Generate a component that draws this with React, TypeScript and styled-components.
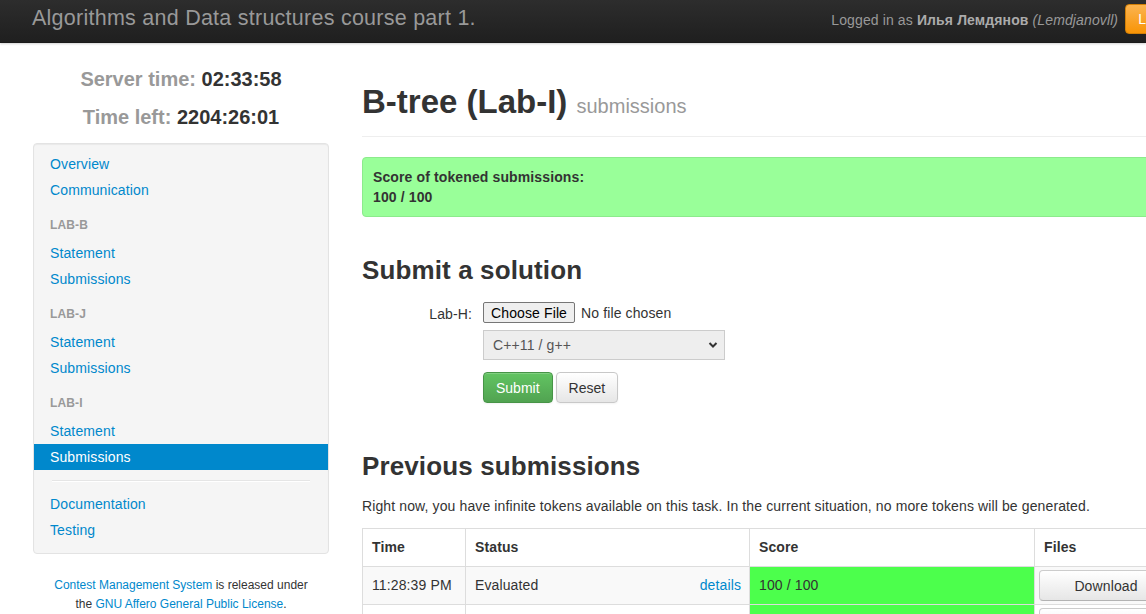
import React from "react";
import styled, { createGlobalStyle } from "styled-components";

const GlobalStyle = createGlobalStyle`
  html, body {
    margin: 0;
    padding: 0;
    overflow: hidden;
    background: #fff;
  }
  body {
    font-family: "Liberation Sans", Arial, Helvetica, sans-serif;
    font-size: 14px;
    line-height: 20px;
    letter-spacing: 0.12px;
    color: #333;
  }
  * { box-sizing: border-box; }
`;

const Navbar = styled.header`
  height: 43px;
  background: linear-gradient(to bottom, #2d2d2d, #1f1f1f);
  border-bottom: 1px solid #1a1a1a;
  box-shadow: 0 1px 2px rgba(0, 0, 0, 0.18);
  overflow: hidden;
`;

const NavInner = styled.div`
  width: 1200px;
  height: 100%;
  display: flex;
  align-items: flex-start;
  justify-content: space-between;
  padding: 0 6px 0 32px;
`;

const Brand = styled.a`
  font-size: 21.5px;
  line-height: 22px;
  letter-spacing: 0.25px;
  padding-top: 7px;
  color: #999;
  text-decoration: none;
`;

const UserArea = styled.div`
  display: flex;
  align-items: flex-start;
`;

const UserText = styled.span`
  padding-top: 10px;
  color: #999;
  line-height: 20px;
  strong {
    color: #ababab;
  }
  em {
    color: #999;
  }
`;

const LogoutButton = styled.button`
  margin: 4px 0 0 7px;
  height: 30px;
  padding: 0 12px;
  font-family: inherit;
  font-size: 14px;
  color: #fff;
  background: linear-gradient(to bottom, #fbb450, #f89406);
  border: 1px solid #d27f06;
  border-radius: 4px;
`;

const Page = styled.div`
  display: flex;
  align-items: flex-start;
  gap: 33px;
  padding-left: 33px;
`;

const Sidebar = styled.aside`
  width: 296px;
  flex-shrink: 0;
`;

const Clock = styled.div`
  padding-top: 17px;
  margin-bottom: 7px;
  text-align: center;
`;

const ClockLine = styled.div`
  font-size: 20px;
  font-weight: bold;
  line-height: 38px;
  letter-spacing: 0;
  color: #333;
`;

const ClockLabel = styled.span`
  color: #999;
`;

const Well = styled.nav`
  background: #f5f5f5;
  border: 1px solid #e3e3e3;
  border-radius: 4px;
  padding: 7px 0 10px;
  box-shadow: inset 0 1px 1px rgba(0, 0, 0, 0.05);
`;

const NavLink = styled.a<{ $active?: boolean }>`
  display: block;
  padding: 3px 16px;
  line-height: 20px;
  color: ${(p) => (p.$active ? "#fff" : "#0088cc")};
  background: ${(p) => (p.$active ? "#0088cc" : "transparent")};
  text-decoration: none;
`;

const NavHeader = styled.div`
  margin-top: 9px;
  padding: 3px 16px 5px;
  line-height: 20px;
  font-size: 12px;
  font-weight: bold;
  text-transform: uppercase;
  color: #999;
`;

const Divider = styled.div`
  height: 1px;
  margin: 10px 18px 9px;
  background: #e5e5e5;
  border-bottom: 1px solid #fff;
  box-sizing: content-box;
`;

const Footer = styled.p`
  margin: 22px 0 0;
  font-size: 12px;
  line-height: 19px;
  letter-spacing: 0;
  text-align: center;
  color: #333;
  a {
    color: #0088cc;
    text-decoration: none;
  }
`;

const Main = styled.main`
  width: 815px;
  flex-shrink: 0;
`;

const PageHeader = styled.div`
  margin: 39px 0 20px;
  padding-bottom: 14px;
  border-bottom: 1px solid #eee;
`;

const Title = styled.h1`
  margin: 0;
  font-size: 33px;
  line-height: 40px;
  font-weight: bold;
  letter-spacing: 0;
  color: #333;
`;

const Subtitle = styled.small`
  font-size: 20px;
  line-height: 1;
  font-weight: normal;
  color: #999;
`;

const Alert = styled.div`
  background: #99ff99;
  border: 1px solid #8ceb8c;
  border-radius: 4px;
  padding: 9px 11px 9px 10px;
  font-weight: bold;
  line-height: 20px;
`;

const SectionTitle = styled.h2<{ $top: number }>`
  margin: ${(p) => p.$top}px 0 0;
  font-size: 26px;
  line-height: 40px;
  font-weight: bold;
  color: #333;
`;

const Form = styled.form`
  margin-top: 12px;
  display: grid;
  grid-template-columns: 110px auto;
  column-gap: 11px;
`;

const Label = styled.label`
  text-align: right;
  line-height: 20px;
  padding-top: 2px;
  color: #333;
`;

const Controls = styled.div`
  display: flex;
  flex-direction: column;
  align-items: flex-start;
`;

const FileInput = styled.input`
  font-family: "Liberation Sans", Arial, sans-serif;
  font-size: 14px;
  line-height: 17px;
  letter-spacing: 0.12px;
  color: #333;
  height: 21px;
  &::file-selector-button {
    font-family: inherit;
    font-size: 14px;
    letter-spacing: 0.12px;
    height: 21px;
    padding: 0 7px;
    margin-right: 6px;
    color: #000;
    background: #efefef;
    border: 1px solid #767676;
    border-radius: 2px;
  }
`;

const SelectWrap = styled.div`
  position: relative;
  margin-top: 7px;
  width: 242px;
  height: 30px;
`;

const Select = styled.select`
  appearance: none;
  width: 100%;
  height: 30px;
  padding: 0 24px 0 9px;
  font-family: "Liberation Sans", Arial, sans-serif;
  font-size: 14px;
  letter-spacing: 0.12px;
  color: #555;
  background: #eee;
  border: 1px solid #ccc;
  border-radius: 0;
`;

const Chevron = styled.svg`
  position: absolute;
  right: 7px;
  top: 11px;
  pointer-events: none;
`;

const ButtonRow = styled.div`
  margin-top: 12px;
  display: flex;
  gap: 3px;
`;

const Btn = styled.button<{ $primary?: boolean }>`
  height: 31px;
  padding: 0 12px;
  font-family: "Liberation Sans", Arial, sans-serif;
  font-size: 14px;
  letter-spacing: 0;
  border-radius: 4px;
  color: ${(p) => (p.$primary ? "#fff" : "#333")};
  background: ${(p) =>
    p.$primary
      ? "linear-gradient(to bottom, #62c462, #51a351)"
      : "linear-gradient(to bottom, #ffffff, #e6e6e6)"};
  border: 1px solid ${(p) => (p.$primary ? "#479447" : "#c8c8c8")};
  box-shadow: inset 0 1px 0 rgba(255, 255, 255, 0.2), 0 1px 2px rgba(0, 0, 0, 0.05);
`;

const Paragraph = styled.p`
  margin: 10px 0 0;
  line-height: 20px;
`;

const Table = styled.table`
  margin-top: 12px;
  width: 815px;
  table-layout: fixed;
  border-collapse: collapse;
  border: 1px solid #ddd;
`;

const Th = styled.th`
  height: 38px;
  padding: 0 8px 1px 9px;
  text-align: left;
  font-weight: bold;
  line-height: 20px;
  border: 1px solid #ddd;
  background: #fff;
`;

const Row = styled.tr<{ $striped?: boolean }>`
  background: ${(p) => (p.$striped ? "#f9f9f9" : "#fff")};
`;

const Td = styled.td<{ $score?: boolean }>`
  height: 37px;
  padding: 0 8px 1px 9px;
  line-height: 20px;
  border: 1px solid #ddd;
  vertical-align: middle;
  background: ${(p) => (p.$score ? "#4cff4c" : "transparent")};
`;

const FilesTd = styled.td`
  height: 37px;
  padding: 3px 4px;
  border: 1px solid #ddd;
  vertical-align: top;
`;

const StatusCell = styled.div`
  display: flex;
  justify-content: space-between;
  a {
    color: #0088cc;
    text-decoration: none;
  }
`;

const DownloadButton = styled.button`
  width: 100%;
  height: 31px;
  font-family: "Liberation Sans", Arial, sans-serif;
  font-size: 14px;
  letter-spacing: 0.12px;
  color: #333;
  background: linear-gradient(to bottom, #ffffff, #e6e6e6);
  border: 1px solid #cccccc;
  border-bottom-color: #b3b3b3;
  border-radius: 4px;
`;

const submissions = [
  { time: "11:28:39 PM", status: "Evaluated", score: "100 / 100" },
  { time: "11:20:05 PM", status: "Evaluated", score: "100 / 100" },
];

export default function App() {
  return (
    <>
      <GlobalStyle />
      <Navbar>
        <NavInner>
          <Brand href="#">Algorithms and Data structures course part 1.</Brand>
          <UserArea>
            <UserText>
              Logged in as <strong>Илья Лемдянов</strong> <em>(Lemdjanovll)</em>
            </UserText>
            <LogoutButton>Logout</LogoutButton>
          </UserArea>
        </NavInner>
      </Navbar>
      <Page>
        <Sidebar>
          <Clock>
            <ClockLine>
              <ClockLabel>Server time:</ClockLabel> 02:33:58
            </ClockLine>
            <ClockLine>
              <ClockLabel>Time left:</ClockLabel> 2204:26:01
            </ClockLine>
          </Clock>
          <Well>
            <NavLink href="#">Overview</NavLink>
            <NavLink href="#">Communication</NavLink>
            <NavHeader>Lab-B</NavHeader>
            <NavLink href="#">Statement</NavLink>
            <NavLink href="#">Submissions</NavLink>
            <NavHeader>Lab-J</NavHeader>
            <NavLink href="#">Statement</NavLink>
            <NavLink href="#">Submissions</NavLink>
            <NavHeader>Lab-I</NavHeader>
            <NavLink href="#">Statement</NavLink>
            <NavLink href="#" $active>
              Submissions
            </NavLink>
            <Divider />
            <NavLink href="#">Documentation</NavLink>
            <NavLink href="#">Testing</NavLink>
          </Well>
          <Footer>
            <a href="#">Contest Management System</a> is released under
            <br />
            the <a href="#">GNU Affero General Public License</a>.
          </Footer>
        </Sidebar>
        <Main>
          <PageHeader>
            <Title>
              B-tree (Lab-I) <Subtitle>submissions</Subtitle>
            </Title>
          </PageHeader>
          <Alert>
            Score of tokened submissions:
            <br />
            100 / 100
          </Alert>
          <SectionTitle $top={33}>Submit a solution</SectionTitle>
          <Form onSubmit={(e) => e.preventDefault()}>
            <Label htmlFor="file">Lab-H:</Label>
            <Controls>
              <FileInput id="file" type="file" />
              <SelectWrap>
                <Select defaultValue="cpp">
                  <option value="cpp">C++11 / g++</option>
                </Select>
                <Chevron width="10" height="8" viewBox="0 0 10 8">
                  <polyline
                    points="1.5,2 5,5.5 8.5,2"
                    fill="none"
                    stroke="#333"
                    strokeWidth="2"
                  />
                </Chevron>
              </SelectWrap>
              <ButtonRow>
                <Btn $primary type="submit">
                  Submit
                </Btn>
                <Btn type="reset">Reset</Btn>
              </ButtonRow>
            </Controls>
          </Form>
          <SectionTitle $top={43}>Previous submissions</SectionTitle>
          <Paragraph>
            Right now, you have infinite tokens available on this task. In the
            current situation, no more tokens will be generated.
          </Paragraph>
          <Table>
            <colgroup>
              <col style={{ width: 103 }} />
              <col style={{ width: 284 }} />
              <col style={{ width: 285 }} />
              <col style={{ width: 143 }} />
            </colgroup>
            <thead>
              <tr>
                <Th>Time</Th>
                <Th>Status</Th>
                <Th>Score</Th>
                <Th>Files</Th>
              </tr>
            </thead>
            <tbody>
              {submissions.map((s, i) => (
                <Row key={i} $striped={i % 2 === 0}>
                  <Td>{s.time}</Td>
                  <Td>
                    <StatusCell>
                      <span>{s.status}</span>
                      <a href="#">details</a>
                    </StatusCell>
                  </Td>
                  <Td $score>{s.score}</Td>
                  <FilesTd>
                    <DownloadButton>Download</DownloadButton>
                  </FilesTd>
                </Row>
              ))}
            </tbody>
          </Table>
        </Main>
      </Page>
    </>
  );
}
